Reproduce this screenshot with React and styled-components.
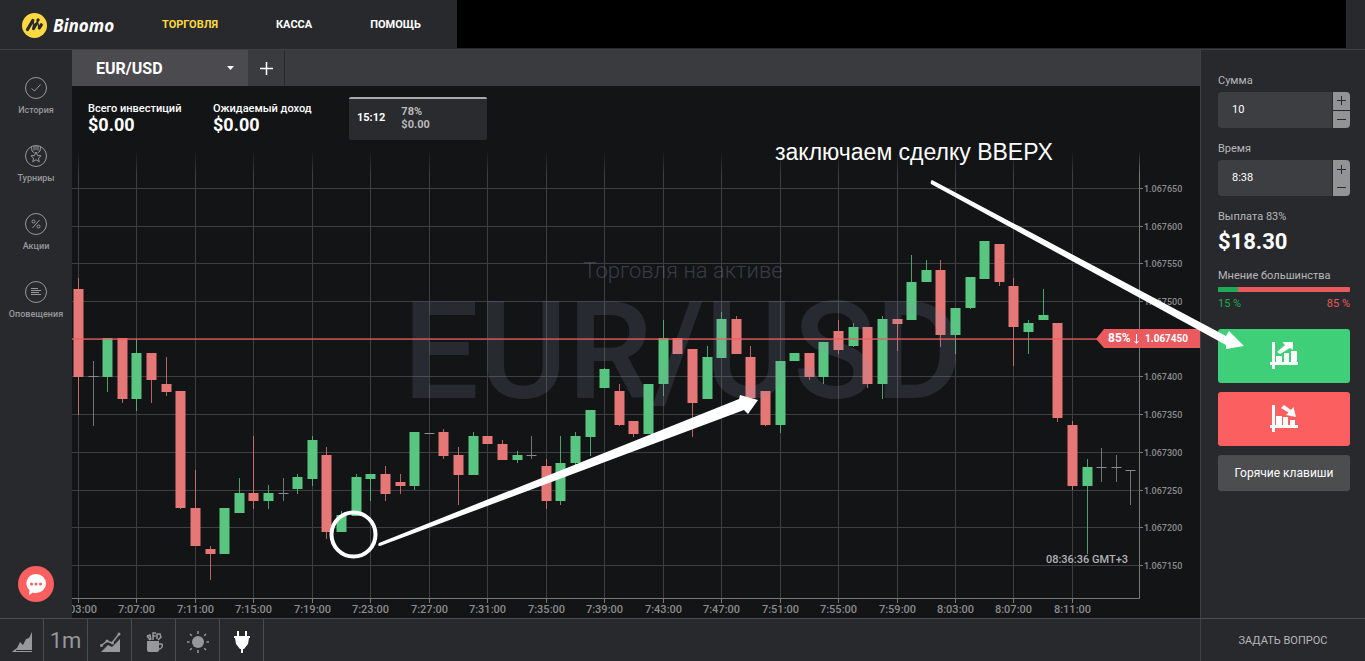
import React, { useState } from 'react';
import styled, { createGlobalStyle } from 'styled-components';

const COLORS = {
  Panel: '#28292d',
  Chart: '#131416',
  Tabs: '#3a3b3f',
  Tab: '#4b4b4f',
  Line: '#3f4044',
  Field: '#3d3e42',
  Muted: '#97989a',
  Yellow: '#ffd93f',
  Green: '#3ecf78',
  Red: '#fb5f5f',
};

const GlobalStyle = createGlobalStyle`
  * {
    box-sizing: border-box;
  }

  body {
    margin: 0;
    background-color: ${COLORS.Panel};
    color: #fff;
    font-family: Roboto, 'Liberation Sans', sans-serif;
    font-size: 11px;
  }

  button, input {
    margin: 0;
    padding: 0;
    border: 0;
    background: none;
    color: inherit;
    font: inherit;
  }

  button {
    cursor: pointer;
  }

  a {
    color: inherit;
    text-decoration: none;
  }
`;

const Page = styled.div`
  position: relative;
  display: flex;
  flex-direction: column;
  min-height: 100vh;
`;

const Header = styled.header`
  display: flex;
  height: 50px;
  padding-right: 19px;
  border-bottom: 1px solid ${COLORS.Line};
`;

const Logo = styled.a`
  display: flex;
  align-items: center;
  gap: 6px;
  width: 162px;
  padding: 2px 0 0 22px;
  font-family: 'Open Sans', sans-serif;
  font-size: 17px;
  font-style: italic;
  font-weight: 700;
`;

const Nav = styled.nav`
  display: flex;
  align-items: center;
  gap: 58px;
  padding-right: 36px;
  font-size: 11px;
  font-weight: 700;
`;

const NavLink = styled.a`
  color: ${props => props.$active ? COLORS.Yellow : '#fff'};
`;

const Account = styled.div`
  flex: 1;
  height: 48px;
  background-color: #000;
`;

const Body = styled.div`
  display: flex;
  flex: 1;
`;

const Sidebar = styled.aside`
  display: flex;
  flex-direction: column;
  align-items: center;
  width: 72px;
  padding: 27px 0 16px;
`;

const SideLink = styled.a`
  display: flex;
  flex-direction: column;
  align-items: center;
  gap: 4px;
  height: 68px;
  color: ${COLORS.Muted};
  font-size: 9px;
  font-weight: 500;
  line-height: 14px;
`;

const ChatButton = styled.button`
  display: flex;
  align-items: center;
  justify-content: center;
  width: 36px;
  height: 36px;
  margin-top: auto;
  border-radius: 50%;
  background-color: ${COLORS.Red};
`;

const Main = styled.main`
  display: flex;
  flex: 1;
  flex-direction: column;
  min-width: 0;
  background-color: ${COLORS.Chart};
`;

const Tabs = styled.div`
  display: flex;
  height: 36px;
  background-color: ${COLORS.Tabs};
`;

const Tab = styled.button`
  display: flex;
  align-items: center;
  justify-content: space-between;
  width: 176px;
  padding: 0 14px 0 24px;
  background-color: ${COLORS.Tab};
  font-size: 16px;
  font-weight: 700;
`;

const AddTab = styled.button`
  display: flex;
  align-items: center;
  justify-content: center;
  width: 37px;
  border-right: 1px solid ${COLORS.Panel};
`;

const Stats = styled.div`
  display: flex;
  height: 64px;
  padding: 11px 16px 0;
`;

const Stat = styled.div`
  width: ${props => props.$wide ? '136px' : '125px'};
  padding-top: 4px;
  font-size: 11px;
  font-weight: 500;
  line-height: 16px;
`;

const StatValue = styled.div`
  font-size: 18px;
  font-weight: 700;
`;

const Deal = styled.div`
  display: flex;
  align-items: center;
  gap: 16px;
  width: 138px;
  height: 43px;
  padding: 0 8px 4px;
  border-top: 2px solid #a9aaac;
  border-radius: 2px;
  background-color: #2a2b2e;
  font-size: 11px;
  font-weight: 700;
`;

const DealResult = styled.div`
  color: #b9babb;
  line-height: 13px;
`;

const ChartSvg = styled.svg`
  display: block;
  width: 100%;
  font-family: Roboto, sans-serif;
`;

const Annotations = styled.svg`
  position: absolute;
  top: 0;
  left: 0;
  width: 100%;
  pointer-events: none;
`;

const OrderPanel = styled.aside`
  display: flex;
  flex-direction: column;
  width: 165px;
  padding: 22px 15px 0 17px;
  border-left: 1px solid ${COLORS.Line};
`;

const Label = styled.label`
  color: #b7b8ba;
  font-size: 11px;
  line-height: 18px;
`;

const Field = styled.div`
  display: flex;
  height: 36px;
  margin: 2px 0 12px;
  overflow: hidden;
  border-radius: 4px;
  background-color: ${COLORS.Field};
`;

const FieldInput = styled.input`
  flex: 1;
  min-width: 0;
  padding: 0 0 2px 14px;
  font-size: 11px;
`;

const Stepper = styled.div`
  display: flex;
  flex-direction: column;
  gap: ${props => props.$split ? '1px' : '0'};
  width: 18px;
  border-left: 1px solid ${COLORS.Panel};
  background-color: ${COLORS.Panel};
`;

const StepButton = styled.button`
  display: flex;
  flex: 1;
  align-items: center;
  justify-content: center;
  background-color: #929395;
  color: ${COLORS.Panel};
`;

const Payout = styled.div`
  margin: 4px 0 13px;
  font-size: 22px;
  font-weight: 700;
  line-height: 24px;
`;

const Opinion = styled.div`
  display: flex;
  height: 5px;
  margin: 2px 0 4px;
  overflow: hidden;
  border-radius: 1px;
  background-color: #ea5a5c;
`;

const OpinionUp = styled.div`
  background-color: #1faa55;
`;

const OpinionValues = styled.div`
  display: flex;
  justify-content: space-between;
  margin-bottom: 17px;
  line-height: 16px;
`;

const Percent = styled.span`
  color: ${props => props.$up ? '#1faa55' : '#ea5a5c'};
`;

const DealButton = styled.button`
  display: flex;
  align-items: center;
  justify-content: center;
  height: 54px;
  margin-bottom: 9px;
  padding-bottom: 2px;
  border-radius: 3px;
  background-color: ${props => props.$up ? COLORS.Green : COLORS.Red};
`;

const HotkeysButton = styled.button`
  height: 36px;
  border-radius: 3px;
  background-color: #4c4d4f;
  font-size: 12px;
`;

const Footer = styled.footer`
  display: flex;
  justify-content: space-between;
  height: 43px;
  border-top: 1px solid #4b4c50;
`;

const Tools = styled.div`
  display: flex;
`;

const Tool = styled.button`
  display: flex;
  align-items: center;
  justify-content: center;
  width: 44px;
  padding-top: 4px;
  border-right: 1px solid #4b4c50;
  color: ${props => props.$active ? '#fff' : COLORS.Muted};
`;

const Period = styled.span`
  padding-bottom: 4px;
  font-size: 22px;
`;

const Question = styled.button`
  width: 165px;
  border-left: 1px solid ${COLORS.Line};
  color: #b7b8ba;
  font-size: 11px;
`;

// [type, high, top, bottom, low] per minute: u - up, d - down, n - no change
const CANDLES = [
  ['d', 278, 289, 377, 415], ['n', 361, 376, 376, 426], ['u', 338, 338, 377, 392],
  ['d', 338, 338, 399, 403], ['u', 339, 353, 399, 411], ['d', 353, 353, 380, 403],
  ['d', 357, 384, 392, 396], ['d', 391, 391, 508, 509], ['d', 470, 508, 546, 546],
  ['d', 546, 549, 554, 580], ['u', 508, 508, 554, 554], ['u', 478, 493, 513, 513],
  ['d', 436, 493, 501, 509], ['u', 485, 493, 501, 509], ['n', 478, 493, 493, 501],
  ['u', 474, 477, 489, 494], ['u', 436, 440, 479, 486], ['d', 447, 455, 532, 539],
  ['u', 511, 515, 532, 532], ['u', 474, 477, 516, 516], ['u', 474, 474, 479, 501],
  ['d', 466, 474, 494, 501], ['d', 474, 482, 486, 494], ['u', 432, 432, 486, 490],
  ['n', 433, 433, 433, 433], ['d', 429, 432, 456, 459], ['d', 447, 455, 475, 505],
  ['u', 432, 436, 475, 475], ['d', 436, 436, 444, 444], ['d', 440, 444, 460, 460],
  ['u', 451, 455, 460, 463], ['n', 436, 455, 455, 459], ['d', 459, 466, 501, 509],
  ['u', 436, 463, 501, 505], ['u', 432, 436, 463, 465], ['u', 410, 410, 437, 456],
  ['u', 368, 369, 388, 388], ['d', 384, 391, 425, 426], ['d', 421, 421, 434, 437],
  ['u', 384, 384, 434, 434], ['u', 320, 338, 384, 396], ['d', 338, 338, 354, 354],
  ['d', 349, 349, 403, 437], ['u', 346, 357, 399, 399], ['u', 312, 319, 358, 358],
  ['d', 316, 319, 354, 354], ['d', 346, 357, 398, 398], ['d', 391, 391, 425, 426],
  ['u', 361, 361, 425, 433], ['u', 353, 353, 361, 361], ['d', 353, 353, 377, 380],
  ['u', 342, 342, 377, 384], ['d', 320, 331, 350, 354], ['u', 323, 327, 346, 347],
  ['d', 327, 327, 384, 388], ['u', 316, 319, 384, 399], ['d', 319, 319, 324, 351],
  ['u', 255, 282, 320, 320], ['u', 260, 270, 282, 282], ['d', 260, 270, 335, 347],
  ['u', 308, 308, 335, 354], ['u', 277, 277, 308, 309], ['u', 241, 241, 279, 279],
  ['d', 244, 244, 282, 286], ['d', 278, 286, 327, 366], ['u', 320, 323, 332, 354],
  ['u', 289, 315, 320, 320], ['d', 323, 323, 418, 422], ['d', 421, 425, 486, 490],
  ['u', 459, 467, 486, 554], ['n', 448, 467, 467, 482], ['n', 455, 467, 467, 482],
  ['n', 470, 470, 470, 505],
];

const CANDLE_COLORS = { u: '#58c580', d: '#e57777', n: '#8b8c8e' };

const PRICES = [650, 600, 550, 500, 450, 400, 350, 300, 250, 200, 150];

const TIMES = [
  '7:03:00', '7:07:00', '7:11:00', '7:15:00', '7:19:00', '7:23:00',
  '7:27:00', '7:31:00', '7:35:00', '7:39:00', '7:43:00', '7:47:00',
  '7:51:00', '7:55:00', '7:59:00', '8:03:00', '8:07:00', '8:11:00',
];

const minuteToX = minute => Math.round(78 + minute * 14.617) + 0.5;
const priceToY = index => Math.round(188 + index * 37.69) + 0.5;

const Candle = ({ minute, data }) => {
  const [type, high, top, bottom, low] = data;
  const x = minuteToX(minute);
  const color = CANDLE_COLORS[type];

  return (
    <g>
      <line x1={x} x2={x} y1={high} y2={low} stroke={color} opacity="0.8" />
      <rect
        x={x - 5}
        y={top}
        width="10"
        height={Math.max(bottom - top, 1)}
        fill={color}
      />
    </g>
  );
};

const Chart = () => (
  <ChartSvg viewBox="72 150 1128 468" role="img" aria-label="EUR/USD">
    <defs>
      <linearGradient id="fade" x1="0" x2="0" y1="0" y2="1">
        <stop offset="0" stopColor={COLORS.Chart} />
        <stop offset="1" stopColor={COLORS.Chart} stopOpacity="0" />
      </linearGradient>
    </defs>
    <g stroke="#3e3f41">
      {PRICES.map((price, i) => (
        <line key={price} x1="72" x2="1139" y1={priceToY(i)} y2={priceToY(i)} />
      ))}
      {TIMES.map((time, i) => (
        <line key={time} x1={minuteToX(i * 4)} x2={minuteToX(i * 4)} y1="150" y2="598" />
      ))}
    </g>
    <g stroke="#77787a">
      <path d="M72 598.5H1139.5V150" fill="none" />
      {TIMES.map((time, i) => (
        <line key={time} x1={minuteToX(i * 4)} x2={minuteToX(i * 4)} y1="598" y2="603" />
      ))}
      {PRICES.map((price, i) => (
        <line key={price} x1="1139" x2="1143" y1={priceToY(i)} y2={priceToY(i)} />
      ))}
    </g>
    <rect x="72" y="150" width="1128" height="24" fill="url(#fade)" />
    {CANDLES.map((data, i) => (
      <Candle key={i} minute={i} data={data} />
    ))}
    <g fill="#8f97b4" textAnchor="middle">
      <text x="683" y="278" fontSize="22" fontWeight="300" opacity="0.3">Торговля на активе</text>
      <text x="683" y="398" fontSize="135" fontWeight="500" opacity="0.17">EUR/USD</text>
    </g>
    <line x1="72" x2="1100" y1="339" y2="339" stroke="#f05a5c" strokeWidth="2" opacity="0.6" />
    <path d="M1096 339L1104 329H1200V348H1104Z" fill="#ea5a5e" />
    <g fill="#fff" fontWeight="700">
      <text x="1108" y="342" fontSize="12">85%</text>
      <path d="M1136.5 334V343M1134.5 341L1136.5 343.5L1138.5 341" fill="none" stroke="#fff" />
      <text x="1145" y="342" fontSize="10">1.067450</text>
    </g>
    <g fill="#8b8c8e" fontSize="9" fontWeight="500">
      {PRICES.map((price, i) => price !== 450 && (
        <text key={price} x="1144" y={priceToY(i) + 3}>{`1.067${price}`}</text>
      ))}
    </g>
    <g fill="#8b8c8e" fontSize="11" fontWeight="500" textAnchor="middle">
      {TIMES.map((time, i) => (
        <text key={time} x={minuteToX(i * 4)} y="613">{time}</text>
      ))}
    </g>
    <text x="1128" y="563" fill="#b1b2b4" fontSize="11" fontWeight="500" textAnchor="end">
      08:36:36 GMT+3
    </text>
  </ChartSvg>
);

const LogoMark = () => (
  <svg width="25" height="25" viewBox="0 0 25 25" aria-hidden="true">
    <circle cx="12.5" cy="12.5" r="12.5" fill={COLORS.Yellow} />
    <g stroke={COLORS.Panel} strokeLinecap="round" strokeLinejoin="round" fill="none">
      <path d="M5.5 16.5L10.8 7.5M11.5 15.5L13.8 11.5M17.3 15L19.3 11.8" strokeWidth="3.2" />
      <path d="M15.8 7.3L16.2 6.8" strokeWidth="3" />
      <path d="M11.2 7.5L11.5 14M15.8 7.5L13.8 11.5M15.5 9.5L17 14" strokeWidth="1.5" />
    </g>
  </svg>
);

const CircleIcon = ({ children }) => (
  <svg width="22" height="22" viewBox="0 0 22 22" fill="none" stroke="currentColor" aria-hidden="true">
    <circle cx="11" cy="11" r="10.5" />
    {children}
  </svg>
);

const SIDE_LINKS = [
  { title: 'История', icon: <path d="M6.5 11.5L9.5 14L15.5 7.5" /> },
  {
    title: 'Турниры',
    icon: (
      <>
        <path d="M11 7L12.5 10.5L16 10.8L13.4 13.2L14.3 16.8L11 14.8L7.7 16.8L8.6 13.2L6 10.8L9.5 10.5Z" />
        <path d="M6.5 2L7 6L9.5 8M15.5 2L15 6L12.5 8M9 1V5.5M13 1V5.5M11 1V5" />
      </>
    ),
  },
  {
    title: 'Акции',
    icon: (
      <>
        <circle cx="8.5" cy="8.5" r="1.5" />
        <circle cx="13.5" cy="13.5" r="1.5" />
        <path d="M14.5 7L7.5 15" />
      </>
    ),
  },
  { title: 'Оповещения', icon: <path d="M6 7.5H13M6 9.5H16M6 11.5H14M6 13.5H16" /> },
];

const DealIcon = ({ up }) => (
  <svg width="30" height="28" viewBox="0 0 30 28" fill="#fff" aria-hidden="true">
    <path d="M3 1H6V21H29V24H6V28H3V24H1V21H3Z" />
    {up ? (
      <>
        <path d="M7 15H13V21H7ZM15 12H20V21H15ZM22 10H28V21H22Z" />
        <path d="M8 11L16 4L13.5 1H24V9L21 7L11 13Z" />
      </>
    ) : (
      <>
        <path d="M7 12H13V21H7ZM14 13H19V21H14ZM21 16H26V21H21Z" />
        <path d="M15 1L22 6L24.5 3L27 13L17 11L19.5 8.5L12 4Z" />
      </>
    )}
  </svg>
);

const PlusMinus = ({ plus }) => (
  <svg width="9" height="9" viewBox="0 0 9 9" stroke="currentColor" aria-hidden="true">
    <path d={plus ? 'M0 4.5H9M4.5 0V9' : 'M0 4.5H9'} />
  </svg>
);

const TOOLS = [
  {
    title: 'Тип графика',
    icon: <path d="M1 19L5 16L8 10L11 13L14 7L17 6L20 0V18H4V19H20V20H0Z" />,
  },
  { title: 'Период', text: '1m' },
  {
    title: 'Индикаторы',
    icon: (
      <>
        <path d="M1 20L8 13L12 15L20 7V20Z" />
        <path d="M1.5 13.5L7 9L12 11L19 2" fill="none" stroke="currentColor" strokeWidth="1.5" />
        <circle cx="1.5" cy="13.5" r="1.5" />
        <circle cx="7" cy="9" r="1.5" />
        <circle cx="12.5" cy="11" r="1.5" />
        <circle cx="19" cy="2" r="1.5" />
      </>
    ),
  },
  {
    title: 'Инструменты',
    icon: (
      <>
        <path d="M3 9H15V18Q15 20 13 20H5Q3 20 3 18Z" />
        <path d="M15 12H17Q19 12 18 15Q17 17 15 17M6 8L3 4M7 8L6 3L3 4M9 8V1H12M9 4H12M13 7V2H16L17 5L14 8" fill="none" stroke="currentColor" strokeWidth="1.5" />
      </>
    ),
  },
  {
    title: 'Тема',
    icon: (
      <>
        <circle cx="10" cy="10" r="6" />
        <path d="M10-1V2M10 18V21M-1 10H1.5M18.5 10H21M2 2L3.8 3.8M16.2 16.2L18 18M18 2L16.2 3.8M3.8 16.2L2 18" fill="none" stroke="currentColor" strokeWidth="1.5" />
      </>
    ),
  },
  {
    title: 'Подключение',
    active: true,
    icon: <path d="M5-1H7V4H13V-1H15V4H18V6H17L16 12L12 17H11V21H9V17H8L4 12L3 6H2V4H5Z" />,
  },
];

const NumberField = ({ id, label, value, onChange, onStep, split }) => (
  <>
    <Label htmlFor={id}>{label}</Label>
    <Field>
      <FieldInput id={id} value={value} onChange={e => onChange(e.target.value)} />
      <Stepper $split={split}>
        <StepButton aria-label={`${label} +`} onClick={() => onStep(1)}><PlusMinus plus /></StepButton>
        <StepButton aria-label={`${label} −`} onClick={() => onStep(-1)}><PlusMinus /></StepButton>
      </Stepper>
    </Field>
  </>
);

const App = () => {
  const [amount, setAmount] = useState('10');
  const [time, setTime] = useState('8:38');
  const up = 15;

  const stepTime = (delta) => {
    const [hours, minutes] = time.split(':').map(Number);
    const total = hours * 60 + minutes + delta;
    setTime(`${Math.floor(total / 60)}:${String(total % 60).padStart(2, '0')}`);
  };

  return (
    <Page>
      <GlobalStyle />
      <Header>
        <Logo href="#"><LogoMark />Binomo</Logo>
        <Nav>
          <NavLink href="#trade" $active>ТОРГОВЛЯ</NavLink>
          <NavLink href="#cash">КАССА</NavLink>
          <NavLink href="#help">ПОМОЩЬ</NavLink>
        </Nav>
        <Account />
      </Header>
      <Body>
        <Sidebar>
          {SIDE_LINKS.map(({ title, icon }) => (
            <SideLink key={title} href="#">
              <CircleIcon>{icon}</CircleIcon>
              {title}
            </SideLink>
          ))}
          <ChatButton aria-label="Чат">
            <svg width="22" height="22" viewBox="0 0 22 22" aria-hidden="true">
              <path d="M11 1A10 9.5 0 0 1 11 20Q9 20 8 19.5L4 22L4.5 17.5A9.5 9.5 0 0 1 11 1Z" fill="#fff" />
              <g fill={COLORS.Red}>
                <circle cx="6.5" cy="11" r="1.5" />
                <circle cx="11" cy="11" r="1.5" />
                <circle cx="15.5" cy="11" r="1.5" />
              </g>
            </svg>
          </ChatButton>
        </Sidebar>
        <Main>
          <Tabs>
            <Tab>
              EUR/USD
              <svg width="7" height="4" viewBox="0 0 7 4" aria-hidden="true">
                <path d="M0 0H7L3.5 4Z" fill="#fff" />
              </svg>
            </Tab>
            <AddTab aria-label="Добавить">
              <svg width="13" height="13" viewBox="0 0 13 13" stroke="#fff" aria-hidden="true">
                <path d="M0 6.5H13M6.5 0V13" strokeWidth="1.5" />
              </svg>
            </AddTab>
          </Tabs>
          <Stats>
            <Stat>
              Всего инвестиций
              <StatValue>$0.00</StatValue>
            </Stat>
            <Stat $wide>
              Ожидаемый доход
              <StatValue>$0.00</StatValue>
            </Stat>
            <Deal>
              15:12
              <DealResult>
                <div>78%</div>
                <div>$0.00</div>
              </DealResult>
            </Deal>
          </Stats>
          <Chart />
        </Main>
        <OrderPanel>
          <NumberField
            id="amount"
            label="Сумма"
            value={amount}
            onChange={setAmount}
            onStep={delta => setAmount(String(Number(amount) + delta))}
            split
          />
          <NumberField
            id="time"
            label="Время"
            value={time}
            onChange={setTime}
            onStep={stepTime}
          />
          <Label as="div">Выплата 83%</Label>
          <Payout>$18.30</Payout>
          <Label as="div">Мнение большинства</Label>
          <Opinion>
            <OpinionUp style={{ width: `${up}%` }} />
          </Opinion>
          <OpinionValues>
            <Percent $up>{up} %</Percent>
            <Percent>{100 - up} %</Percent>
          </OpinionValues>
          <DealButton $up aria-label="Вверх"><DealIcon up /></DealButton>
          <DealButton aria-label="Вниз"><DealIcon /></DealButton>
          <HotkeysButton>Горячие клавиши</HotkeysButton>
        </OrderPanel>
      </Body>
      <Footer>
        <Tools>
          {TOOLS.map(({ title, icon, text, active }) => (
            <Tool key={title} aria-label={title} $active={active}>
              {text ? <Period>{text}</Period> : (
                <svg width="20" height="20" viewBox="0 0 20 20" fill="currentColor" overflow="visible" aria-hidden="true">
                  {icon}
                </svg>
              )}
            </Tool>
          ))}
        </Tools>
        <Question>ЗАДАТЬ ВОПРОС</Question>
      </Footer>
      <Annotations viewBox="0 0 1365 661" fill="#fff">
        <text x="775" y="160" fontFamily="'Liberation Sans', Arial, sans-serif" fontSize="23">
          заключаем сделку ВВЕРХ
        </text>
        <circle cx="353.5" cy="534.5" r="22" fill="none" stroke="#fff" strokeWidth="4" />
        <path d="M379 543L739 399L740 395L758 400L748 414L744 410L380 546Q377 546 379 543Z" />
        <path d="M932 180L1226 336L1229 331L1244 346L1226 349L1226 345L931 184Q930 181 932 180Z" />
      </Annotations>
    </Page>
  );
};

export default App;
